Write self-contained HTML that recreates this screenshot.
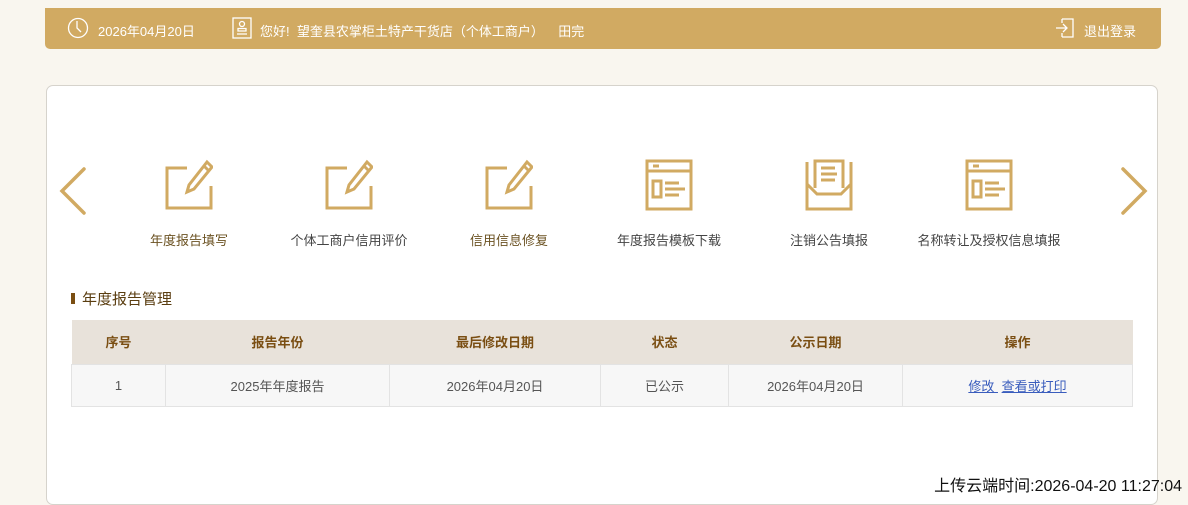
<!DOCTYPE html>
<html><head><meta charset="utf-8"><style>
*{margin:0;padding:0;box-sizing:border-box}
body{width:1188px;height:495px;overflow:hidden;background:#f9f6ef;font-family:"Liberation Sans","Noto Sans CJK SC",sans-serif;position:relative}
.bar{position:absolute;left:45px;top:8px;width:1116px;height:41px;background:#d1aa62;border-radius:0 0 5px 5px;color:#fff;font-size:13px}
.bar span{position:absolute;top:13px}
.card{position:absolute;left:46px;top:85px;width:1112px;height:420px;background:#fff;border:1px solid #d6d3cc;border-radius:7px}
.it{position:absolute;top:72px;width:160px;text-align:center;font-size:13px;color:#444}
.it svg{display:block;margin:0 auto 18px}
.t1{color:#6b5222}
table{position:absolute;left:24px;top:234px;width:1062px;border-collapse:collapse;font-size:13px;text-align:center}
th{background:#e8e2da;color:#7a4e12;height:44px;font-weight:bold}
td{background:#f7f7f7;height:42px;color:#555;border:1px solid #e3e3e3}
a{color:#3a5dbd;text-decoration:underline}
</style></head><body>
<div class="bar">
<svg style="position:absolute;left:22px;top:9px" width="22" height="22" viewBox="0 0 22 22" fill="none" stroke="#fff" stroke-width="1.3"><circle cx="11" cy="11" r="9.5"/><path d="M10 4v7l4 4"/></svg>
<span style="left:53px">2026年04月20日</span>
<svg style="position:absolute;left:187px;top:9px" width="20" height="22" viewBox="0 0 20 22" fill="none" stroke="#fff" stroke-width="1.3"><rect x="1" y="1" width="18" height="20"/><circle cx="10" cy="7" r="2.5"/><path d="M6 14v-2.5h8V14H6zM5 17h10"/></svg>
<span style="left:215px">您好!&nbsp;&nbsp;望奎县农掌柜土特产干货店（个体工商户）&nbsp;&nbsp;&nbsp;&nbsp;田完</span>
<svg style="position:absolute;left:1010px;top:10px" width="20" height="20" viewBox="0 0 20 20" fill="none" stroke="#fff" stroke-width="1.3"><path d="M7 1h11v18H7M7 5V1M7 19v-4M1 10h10M8 6l4 4-4 4"/></svg>
<span style="left:1039px">退出登录</span>
</div>
<div class="card">
<svg style="position:absolute;left:12px;top:80px" width="28" height="50" viewBox="0 0 28 50" fill="none" stroke="#d1aa62" stroke-width="3.5" stroke-linecap="round"><path d="M25 3L3 25l22 22"/></svg>
<svg style="position:absolute;left:1073px;top:80px" width="28" height="50" viewBox="0 0 28 50" fill="none" stroke="#d1aa62" stroke-width="3.5" stroke-linecap="round"><path d="M3 3l22 22L3 47"/></svg>
<div class="it t1" style="left:62px"><svg width="48" height="54" viewBox="0 0 48 54" fill="none" stroke="#d1aa62" stroke-width="3"><path d="M22 10H2v40h44V28"/><path d="M42 4l5 5-18 22-7 3 2-7z"/><path d="M39 8l4 4"/></svg>年度报告填写</div>
<div class="it" style="left:222px"><svg width="48" height="54" viewBox="0 0 48 54" fill="none" stroke="#d1aa62" stroke-width="3"><path d="M22 10H2v40h44V28"/><path d="M42 4l5 5-18 22-7 3 2-7z"/><path d="M39 8l4 4"/></svg>个体工商户信用评价</div>
<div class="it t1" style="left:382px"><svg width="48" height="54" viewBox="0 0 48 54" fill="none" stroke="#d1aa62" stroke-width="3"><path d="M22 10H2v40h44V28"/><path d="M42 4l5 5-18 22-7 3 2-7z"/><path d="M39 8l4 4"/></svg>信用信息修复</div>
<div class="it" style="left:542px"><svg width="48" height="54" viewBox="0 0 48 54" fill="none" stroke="#d1aa62" stroke-width="3"><rect x="2" y="3" width="44" height="48"/><path d="M2 13h44M8 8h6"/><rect x="8" y="23" width="8" height="16"/><path d="M20 25h14M20 31h20M20 37h14"/></svg>年度报告模板下载</div>
<div class="it" style="left:702px"><svg width="48" height="54" viewBox="0 0 48 54" fill="none" stroke="#d1aa62" stroke-width="3"><path d="M10 30V3h28v27M2 4v22l10 10h24l10-10V4M2 26v25h44V26M16 10h14M16 16h16M16 22h14"/></svg>注销公告填报</div>
<div class="it" style="left:862px"><svg width="48" height="54" viewBox="0 0 48 54" fill="none" stroke="#d1aa62" stroke-width="3"><rect x="2" y="3" width="44" height="48"/><path d="M2 13h44M8 8h6"/><rect x="8" y="23" width="8" height="16"/><path d="M20 25h14M20 31h20M20 37h14"/></svg>名称转让及授权信息填报</div>
<div style="position:absolute;left:24px;top:207px;width:4px;height:11px;background:#7a4e12"></div>
<div style="position:absolute;left:35px;top:202px;font-size:15px;color:#5a3d10">年度报告管理</div>
<table><tr><th style="width:94px">序号</th><th style="width:224px">报告年份</th><th style="width:211px">最后修改日期</th><th style="width:128px">状态</th><th style="width:174px">公示日期</th><th>操作</th></tr>
<tr><td>1</td><td>2025年年度报告</td><td>2026年04月20日</td><td>已公示</td><td>2026年04月20日</td><td><a>修改&nbsp;</a>&nbsp;<a>查看或打印</a></td></tr></table>
</div>
<div style="position:absolute;right:6px;top:472px;font-size:16px;color:#111">上传云端时间:2026-04-20 11:27:04</div>
</body></html>
